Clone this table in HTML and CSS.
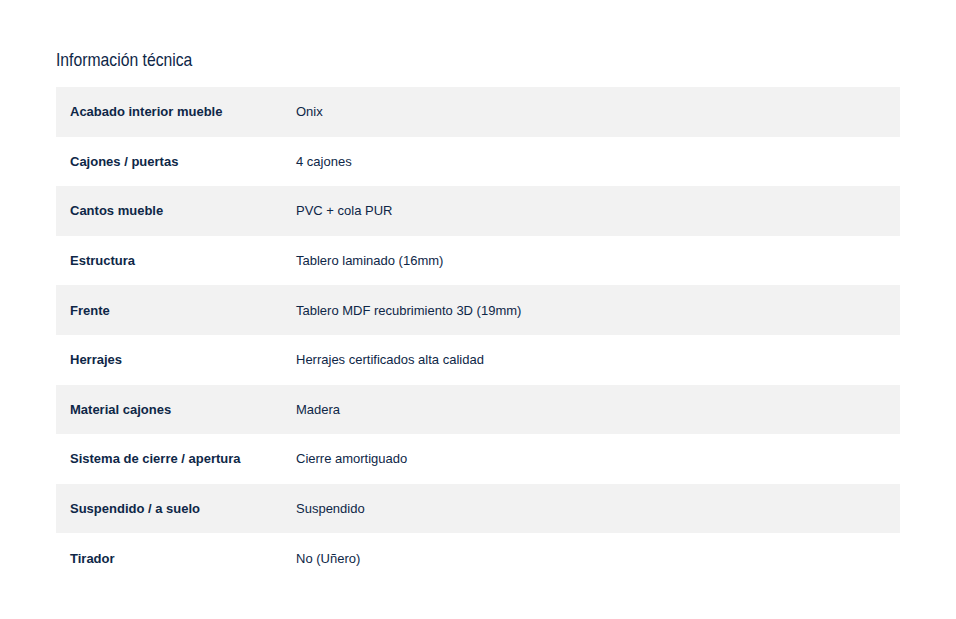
FILE: index.html
```html
<!DOCTYPE html>
<html lang="es">
<head>
<meta charset="utf-8">
<link rel="stylesheet" href="styles.css">
</head>
<body>
<section class="info">
  <h2 class="title"><span class="title-text">Información técnica</span></h2>
  <table class="specs">
    <colgroup><col class="col-label"><col class="col-value"></colgroup>
    <tbody>
      <tr><th>Acabado interior mueble</th><td>Onix</td></tr>
      <tr><th>Cajones / puertas</th><td>4 cajones</td></tr>
      <tr><th>Cantos mueble</th><td>PVC + cola PUR</td></tr>
      <tr><th>Estructura</th><td>Tablero laminado (16mm)</td></tr>
      <tr><th>Frente</th><td>Tablero MDF recubrimiento 3D (19mm)</td></tr>
      <tr><th>Herrajes</th><td>Herrajes certificados alta calidad</td></tr>
      <tr><th>Material cajones</th><td>Madera</td></tr>
      <tr><th>Sistema de cierre / apertura</th><td>Cierre amortiguado</td></tr>
      <tr><th>Suspendido / a suelo</th><td>Suspendido</td></tr>
      <tr><th>Tirador</th><td>No (Uñero)</td></tr>
    </tbody>
  </table>
</section>
</body>
</html>
```
FILE: styles.css
```css
html, body {
  margin: 0;
  padding: 0;
  background: #ffffff;
}
body {
  font-family: "Liberation Sans", Arial, sans-serif;
  color: #0e2747;
}
.info {
  padding: 48px 56px 0 56px;
}
.title {
  margin: 0 0 15px 0;
  font-family: "Liberation Sans", Arial, sans-serif;
  font-weight: normal;
  font-size: 18.5px;
  line-height: 24px;
  color: #0e2747;
}
.title-text {
  display: inline-block;
  transform: scaleX(0.85);
  transform-origin: left center;
}
.specs {
  width: 844px;
  table-layout: fixed;
  border-collapse: collapse;
  border-spacing: 0;
}
.col-label {
  width: 240px;
}
.specs tr {
  height: 49.6px;
}
.specs tr:nth-child(odd) {
  background: #f2f2f2;
}
.specs th,
.specs td {
  padding: 0 14px;
  font-size: 13px;
  text-align: left;
  vertical-align: middle;
  color: #0e2747;
}
.specs td {
  padding-left: 0;
  font-weight: normal;
}
.specs th {
  font-weight: bold;
}
```
